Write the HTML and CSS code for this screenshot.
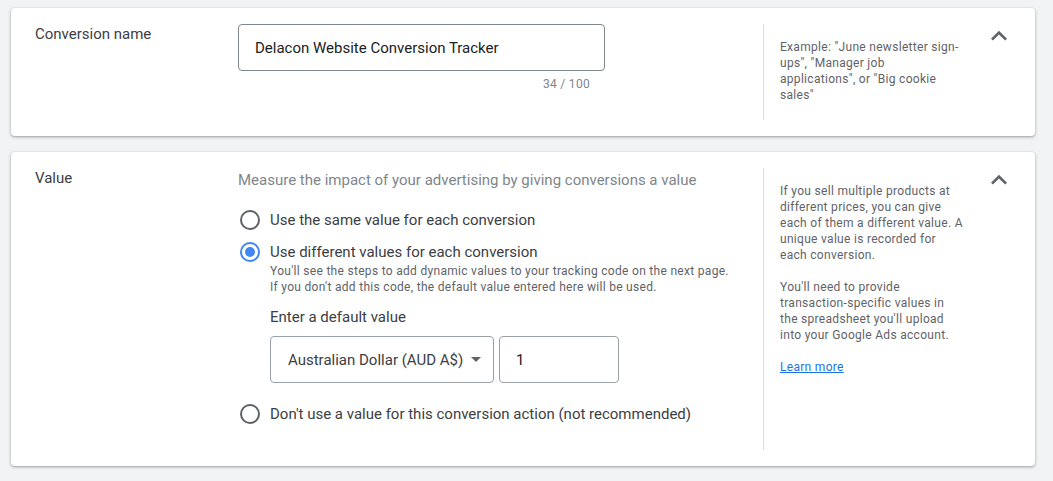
FILE: index.html
```html
<!DOCTYPE html>
<html lang="en">
<head>
<meta charset="utf-8">
<title>Conversion settings</title>
<link rel="stylesheet" href="styles.css">
</head>
<body>
<div class="page">
  <section class="card">
    <div class="label">Conversion name</div>
    <div class="main">
      <div class="field-wrap">
        <div class="text-input">Delacon Website Conversion Tracker</div>
        <div class="counter">34 / 100</div>
      </div>
    </div>
    <div class="help">
      <p>Example: "June newsletter sign-ups", "Manager job applications", or "Big cookie sales"</p>
    </div>
    <div class="toggle">
      <svg viewBox="0 0 24 24" width="32" height="32"><path d="M12 8l-6 6 1.41 1.41L12 10.83l4.59 4.58L18 14z" fill="#5f6368"/></svg>
    </div>
  </section>

  <section class="card">
    <div class="label">Value</div>
    <div class="main">
      <div class="subtitle">Measure the impact of your advertising by giving conversions a value</div>
      <div class="options">
        <div class="option">
          <span class="radio"></span>
          <div class="option-body">
            <div class="option-label">Use the same value for each conversion</div>
          </div>
        </div>
        <div class="option option-gap">
          <span class="radio checked"></span>
          <div class="option-body">
            <div class="option-label">Use different values for each conversion</div>
            <div class="option-desc">You'll see the steps to add dynamic values to your tracking code on the next page.<br>If you don't add this code, the default value entered here will be used.</div>
            <div class="default-label">Enter a default value</div>
            <div class="value-row">
              <div class="select">
                <span>Australian Dollar (AUD A$)</span>
                <span class="caret"></span>
              </div>
              <div class="number">1</div>
            </div>
          </div>
        </div>
        <div class="option option-last">
          <span class="radio"></span>
          <div class="option-body">
            <div class="option-label">Don't use a value for this conversion action (not recommended)</div>
          </div>
        </div>
      </div>
    </div>
    <div class="help">
      <p>If you sell multiple products at different prices, you can give each of them a different value. A unique value is recorded for each conversion.</p>
      <p>You'll need to provide transaction-specific values in the spreadsheet you'll upload into your Google Ads account.</p>
      <p><a href="#" class="link">Learn more</a></p>
    </div>
    <div class="toggle">
      <svg viewBox="0 0 24 24" width="32" height="32"><path d="M12 8l-6 6 1.41 1.41L12 10.83l4.59 4.58L18 14z" fill="#5f6368"/></svg>
    </div>
  </section>
</div>
</body>
</html>
```

FILE: styles.css
```css
* { box-sizing: border-box; }

html, body {
  margin: 0;
  padding: 0;
  background: #f1f3f4;
  font-family: Roboto, "Liberation Sans", Arial, sans-serif;
  color: #3c4043;
}

.page {
  padding: 8px 0 15px 11px;
  display: flex;
  flex-direction: column;
  gap: 16px;
}

.card {
  width: 1024px;
  background: #fff;
  border-radius: 4px;
  box-shadow: 0 1px 2px rgba(60, 64, 67, 0.3), 0 1px 3px 1px rgba(60, 64, 67, 0.15);
  padding: 16px 20px 16px 24px;
  display: grid;
  grid-template-columns: 203px 525px 220px 32px;
  align-items: stretch;
}

.label {
  font-size: 15px;
  line-height: 20px;
  color: #3c4043;
}

.main {
  padding-bottom: 26px;
}

.field-wrap {
  width: 367px;
}

.text-input {
  height: 47px;
  border: 1px solid #80868b;
  border-radius: 4px;
  padding: 0 16px;
  display: flex;
  align-items: center;
  font-size: 15px;
  color: #202124;
}

.counter {
  margin-top: 5px;
  margin-bottom: 2px;
  text-align: right;
  padding-right: 15px;
  font-size: 12px;
  line-height: 16px;
  letter-spacing: 0.3px;
  color: #80868b;
}

.help {
  border-left: 1px solid #dadce0;
  padding: 15px 20px 0 16px;
  font-size: 12px;
  line-height: 16px;
  letter-spacing: 0.3px;
  color: #5f6368;
}

.help p {
  margin: 0 0 16px;
}

.link {
  color: #1a73e8;
  text-decoration: underline;
}

.toggle {
  align-self: start;
  height: 32px;
  margin-top: -4px;
}

.toggle svg { display: block; }

.subtitle {
  font-size: 15px;
  line-height: 24px;
  color: #80868b;
}

.options {
  margin-top: 18px;
}

.option {
  display: flex;
  gap: 10px;
  padding-left: 2px;
}

.option-gap { margin-top: 12px; }
.option-last { margin-top: 21px; }

.radio {
  flex: none;
  width: 20px;
  height: 20px;
  border: 2px solid #5f6368;
  border-radius: 50%;
  display: flex;
  align-items: center;
  justify-content: center;
}

.radio.checked {
  border-color: #4285f4;
}

.radio.checked::after {
  content: "";
  width: 10px;
  height: 10px;
  border-radius: 50%;
  background: #4285f4;
}

.option-label {
  font-size: 15px;
  line-height: 20px;
  color: #3c4043;
}

.option-desc {
  margin-top: 1px;
  font-size: 12px;
  line-height: 16px;
  letter-spacing: 0.3px;
  color: #5f6368;
}

.default-label {
  margin-top: 12px;
  font-size: 15px;
  line-height: 20px;
  color: #3c4043;
}

.value-row {
  margin-top: 9px;
  display: flex;
  gap: 5px;
}

.select {
  width: 224px;
  height: 47px;
  border: 1px solid #9aa0a6;
  border-radius: 4px;
  padding: 0 0 0 17px;
  display: flex;
  align-items: center;
  gap: 8px;
  font-size: 15px;
  color: #3c4043;
}

.caret {
  width: 0;
  height: 0;
  border-left: 5px solid transparent;
  border-right: 5px solid transparent;
  border-top: 5px solid #5f6368;
}

.number {
  width: 120px;
  height: 47px;
  border: 1px solid #9aa0a6;
  border-radius: 4px;
  padding: 0 16px;
  display: flex;
  align-items: center;
  font-size: 15px;
  color: #202124;
}
```
